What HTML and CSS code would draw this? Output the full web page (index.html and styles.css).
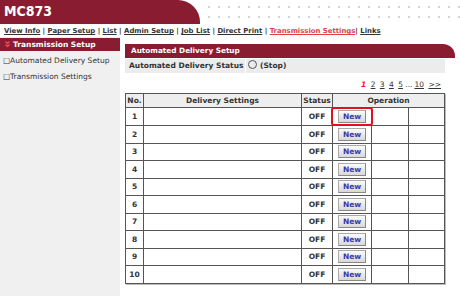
FILE: index.html
```html
<!DOCTYPE html>
<html>
<head>
  <title>MC873 - Automated Delivery Setup</title>
  <link rel="stylesheet" href="styles.css">
</head>
<body>
  <div class="header">
    <div class="brand">MC873</div>
    <div class="dots"></div>
  </div>
  <div class="nav">
    <a href="#">View Info</a> | <a href="#">Paper Setup</a> | <a href="#">List</a> | <a href="#">Admin Setup</a> | <a href="#">Job List</a> | <a href="#">Direct Print</a> | <a href="#" class="current">Transmission Settings</a>| <a href="#">Links</a>
  </div>
  <div class="page">
    <div class="sidebar">
      <div class="side-title">
        <svg class="chev" width="5" height="7" viewBox="0 0 5 7"><path d="M0.5 0.5 L2.5 2.5 L4.5 0.5 M0.5 3.5 L2.5 5.5 L4.5 3.5" fill="none" stroke="#ff4a5a" stroke-width="1.2"/></svg>Transmission Setup
      </div>
      <div class="side-item">&#x25A1;Automated Delivery Setup</div>
      <div class="side-item">&#x25A1;Transmission Settings</div>
    </div>
    <div class="main">
      <div class="title-bar">Automated Delivery Setup</div>
      <div class="status-row">
        <div class="status-label">Automated Delivery Status</div>
        <div class="status-value"><span class="radio"></span>(Stop)</div>
      </div>
      <div class="pager">
        <span class="page-cur">1</span>
        <a href="#">2</a> <a href="#">3</a> <a href="#">4</a> <a href="#">5</a> ...<a href="#">10</a> <a href="#">&gt;&gt;</a>
      </div>
      <table class="list">
        <tr class="head">
          <th class="c-no">No.</th>
          <th class="c-set">Delivery Settings</th>
          <th class="c-st">Status</th>
          <th colspan="3">Operation</th>
        </tr>
        <tr><td>1</td><td></td><td>OFF</td><td class="c-op"><span class="mark"><button>New</button></span></td><td class="c-e"></td><td class="c-e"></td></tr>
        <tr><td>2</td><td></td><td>OFF</td><td class="c-op"><button>New</button></td><td></td><td></td></tr>
        <tr><td>3</td><td></td><td>OFF</td><td class="c-op"><button>New</button></td><td></td><td></td></tr>
        <tr><td>4</td><td></td><td>OFF</td><td class="c-op"><button>New</button></td><td></td><td></td></tr>
        <tr><td>5</td><td></td><td>OFF</td><td class="c-op"><button>New</button></td><td></td><td></td></tr>
        <tr><td>6</td><td></td><td>OFF</td><td class="c-op"><button>New</button></td><td></td><td></td></tr>
        <tr><td>7</td><td></td><td>OFF</td><td class="c-op"><button>New</button></td><td></td><td></td></tr>
        <tr><td>8</td><td></td><td>OFF</td><td class="c-op"><button>New</button></td><td></td><td></td></tr>
        <tr><td>9</td><td></td><td>OFF</td><td class="c-op"><button>New</button></td><td></td><td></td></tr>
        <tr><td>10</td><td></td><td>OFF</td><td class="c-op"><button>New</button></td><td></td><td></td></tr>
      </table>
    </div>
  </div>
</body>
</html>
```

FILE: styles.css
```css
body {
  margin: 0;
  font-family: 'DejaVu Sans', Verdana, sans-serif;
  font-size: 7.5px;
  color: #333;
  background-color: #fff;
}

.header {
  display: flex;
  height: 24px;
}

.brand {
  width: 200px;
  background-color: #8a1c32;
  color: #fff;
  font-family: 'DejaVu Sans Condensed', 'DejaVu Sans', sans-serif;
  font-size: 14px;
  font-weight: bold;
  padding: 3px 0 0 4px;
  box-sizing: border-box;
  border-top-right-radius: 22px;
}

.dots {
  flex: 1;
  background-image: radial-gradient(circle, #d4d4d4 0.8px, transparent 1.2px);
  background-size: 10px 10px;
  background-position: 4px 2px;
}

.nav {
  padding: 3px 0 0 4px;
  height: 10px;
  font-weight: bold;
  font-size: 6.9px;
  white-space: nowrap;
}

.nav a {
  color: #333;
}

.nav a.current {
  color: #e0404a;
}

.page {
  display: flex;
}

.sidebar {
  width: 120px;
  min-height: 259px;
  background-color: #f0f0f0;
  padding-top: 1px;
}

.side-title {
  background-color: #8a1c32;
  color: #fff;
  font-weight: bold;
  font-size: 7.5px;
  height: 13px;
  line-height: 13px;
  padding-left: 5px;
}

.chev {
  margin-right: 3px;
  vertical-align: -1px;
}

.side-item {
  padding: 3px 0 0 3px;
  height: 13px;
  line-height: 13px;
}

.main {
  flex: 1;
  padding: 7px 5px 0 5px;
}

.title-bar {
  background-color: #8a1c32;
  color: #fff;
  font-weight: bold;
  font-size: 7.3px;
  height: 14px;
  line-height: 14px;
  padding-left: 6px;
  border-top-right-radius: 12px;
}

.status-row {
  display: flex;
  background-color: #ececec;
  margin-top: 1px;
  width: 320px;
  height: 14px;
  line-height: 14px;
  font-weight: bold;
}

.status-label {
  width: 116px;
  padding-left: 4px;
  border-right: 1px solid #fff;
  margin-right: 2px;
}

.radio {
  display: inline-block;
  width: 7px;
  height: 7px;
  border: 1px solid #555;
  border-radius: 50%;
  margin-right: 3px;
  vertical-align: -1px;
}

.pager {
  text-align: right;
  padding: 7px 14px 0 0;
  height: 13px;
  font-size: 7.5px;
  color: #333;
}

.pager a {
  color: #333;
  margin-left: 2px;
}

.page-cur {
  color: #e02020;
  font-weight: bold;
  font-style: italic;
}

.list {
  border-collapse: collapse;
  width: 320px;
  border: 1px solid #666;
  box-shadow: 1px 1px 0 #bbb;
}

.list th,
.list td {
  border: 1px solid #555;
  font-weight: bold;
  text-align: center;
  height: 16.5px;
  padding: 0;
}

.list tr.head th {
  background-color: #eee;
  height: 13px;
}

.c-no { width: 17px; }
.c-set { width: 157px; }
.c-st { width: 30px; }
.c-op { width: 37px; }

button {
  font-family: 'DejaVu Sans', Verdana, sans-serif;
  font-size: 7.5px;
  font-weight: bold;
  color: #3a3aa8;
  background: linear-gradient(#fafafa, #d8d8d8);
  border: 1px solid #aaa;
  border-right-color: #888;
  border-bottom-color: #888;
  padding: 0 4px;
  height: 13px;
  line-height: 11px;
}

.mark {
  display: inline-block;
  border: 2px solid #e01020;
  border-radius: 3px;
  padding: 1px 5px;
  margin: -1px -2px;
}
```
